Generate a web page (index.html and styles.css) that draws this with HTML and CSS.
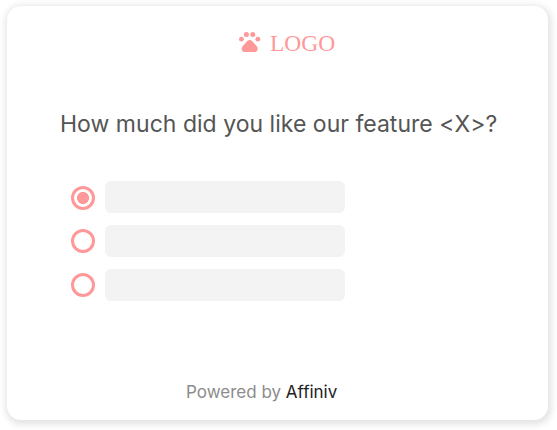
FILE: index.html
```
<!DOCTYPE html>
<html lang="en">
<head>
  <meta charset="UTF-8" />
  <meta name="viewport" content="width=device-width, initial-scale=1" />
  <title>Feature survey</title>
  <link rel="stylesheet" href="styles.css">
</head>
<body>
  <main class="card">
    <header class="logo">
      <svg class="paw" viewBox="0 0 22 20" width="22" height="20" aria-hidden="true">
        <circle cx="2.4" cy="7.2" r="2.4" />
        <circle cx="7.4" cy="2.5" r="2.5" />
        <circle cx="13.8" cy="2.5" r="2.5" />
        <circle cx="18.9" cy="7.2" r="2.4" />
        <path d="M8.3 9.1C9.5 7.6 11.9 7.6 13.1 9.1L17.6 14C19.7 16.3 18.6 20 15.8 20H5.5C2.7 20 1.7 16.3 3.8 14Z" />
      </svg>
      <span>LOGO</span>
    </header>

    <h1>How much did you like our feature &lt;X&gt;?</h1>

    <div class="options">
      <label class="option">
        <input type="radio" name="answer" checked />
        <span class="bar"></span>
      </label>
      <label class="option">
        <input type="radio" name="answer" />
        <span class="bar"></span>
      </label>
      <label class="option">
        <input type="radio" name="answer" />
        <span class="bar"></span>
      </label>
    </div>

    <footer>Powered by <strong>Affiniv</strong></footer>
  </main>
</body>
</html>
```
FILE: styles.css
```
* {
  box-sizing: border-box;
}

body {
  margin: 0;
  padding: 6px 9px 10px 7px;
  height: 430px;
  overflow: hidden;
  font-family: 'Inter', sans-serif;
  background: #fff;
}

.card {
  display: flex;
  flex-direction: column;
  height: 414px;
  padding: 22px 0 0;
  border-radius: 14px;
  background: #fff;
  box-shadow: 1px 2px 6px 3px rgba(0, 0, 0, 0.1);
}

.logo {
  display: flex;
  align-items: center;
  gap: 9px;
  height: 28px;
  padding-left: 232px;
  font-family: 'Liberation Serif', serif;
  font-size: 23.5px;
  line-height: 28px;
  color: #ff9898;
}

.logo span {
  padding-top: 2px;
}

.paw {
  fill: #ff9898;
}

h1 {
  margin: 53px 0 0 53px;
  font-size: 23px;
  font-weight: 430;
  line-height: 30px;
  letter-spacing: 0.02px;
  white-space: nowrap;
  color: #555;
}

.options {
  display: flex;
  flex-direction: column;
  gap: 12px;
  margin: 42px 0 0 64px;
}

.option {
  display: flex;
  align-items: center;
  gap: 10px;
  height: 32px;
}

.option input {
  appearance: none;
  width: 24px;
  height: 24px;
  margin: 0;
  border: 3px solid #ff9898;
  border-radius: 50%;
}

.option input:checked {
  margin-top: 2px;
  background: radial-gradient(circle, #ff9898 5.7px, transparent 6.3px);
}

.bar {
  width: 240px;
  height: 32px;
  border-radius: 6px;
  background: #f3f3f3;
}

footer {
  margin: 79px 0 0 179px;
  font-size: 17px;
  line-height: 24px;
  white-space: nowrap;
  color: #8c8c8c;
}

footer strong {
  font-weight: 400;
  color: #222;
}
```
